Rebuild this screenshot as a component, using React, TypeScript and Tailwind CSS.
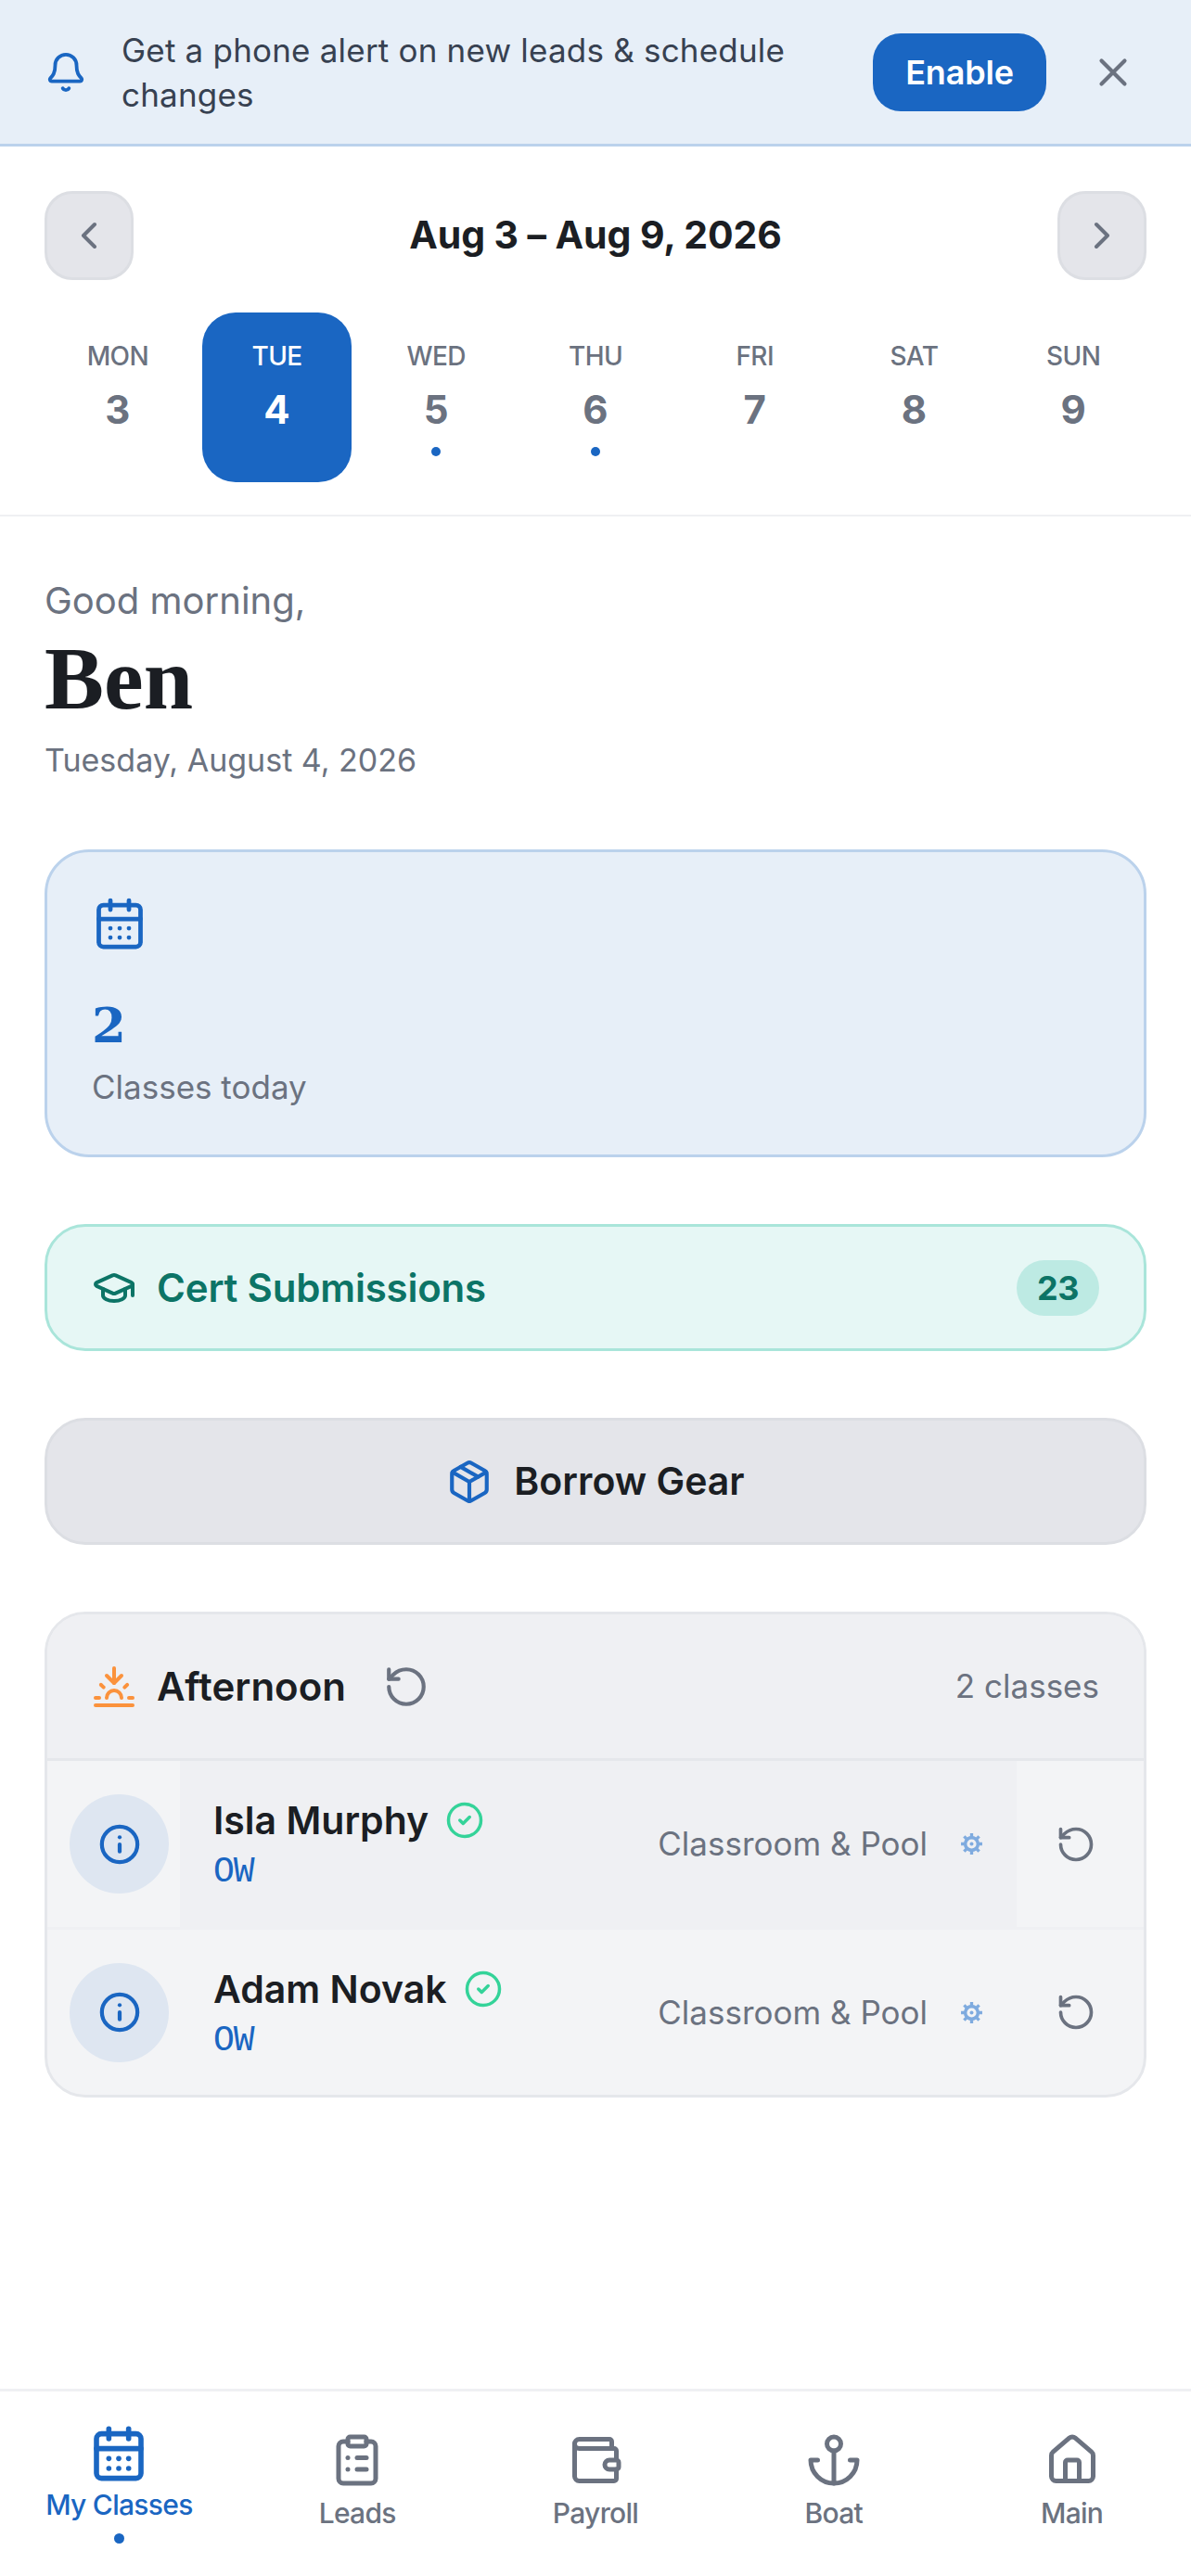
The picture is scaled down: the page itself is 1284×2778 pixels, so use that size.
import { useState } from 'react';
import {
  Bell,
  CalendarDays,
  ChevronLeft,
  ChevronRight,
  CircleCheck,
  ClipboardList,
  GraduationCap,
  House,
  Info,
  Package,
  RotateCcw,
  Sunset,
  Wallet,
  X,
} from 'lucide-react';

const days = [
  { label: 'MON', num: 3 },
  { label: 'TUE', num: 4, active: true },
  { label: 'WED', num: 5, dot: true },
  { label: 'THU', num: 6, dot: true },
  { label: 'FRI', num: 7 },
  { label: 'SAT', num: 8 },
  { label: 'SUN', num: 9 },
];

const classes = [
  { name: 'Isla Murphy', hover: true },
  { name: 'Adam Novak', hover: false },
];

// lucide's current anchor has a crossbar, this one doesn't
function AnchorIcon({ className }: { className?: string }) {
  return (
    <svg viewBox="0 0 24 24" fill="none" stroke="currentColor" strokeWidth={2} strokeLinecap="round" strokeLinejoin="round" className={className}>
      <circle cx="12" cy="5" r="3" />
      <path d="M12 22V8" />
      <path d="M5 12H2a10 10 0 0 0 20 0h-3" />
    </svg>
  );
}

// small eight-tooth cog with a dot in the middle
function GearIcon({ className }: { className?: string }) {
  return (
    <svg viewBox="0 0 24 24" fill="none" stroke="currentColor" className={className}>
      <circle cx="12" cy="12" r="6.6" strokeWidth={3.4} />
      <circle cx="12" cy="12" r="1.9" fill="currentColor" stroke="none" />
      <path d="M12 1v4M12 19v4M1 12h4M19 12h4M4.2 4.2l2.9 2.9M16.9 16.9l2.9 2.9M4.2 19.8l2.9-2.9M16.9 7.1l2.9-2.9" strokeWidth={3.2} />
    </svg>
  );
}

const tabs = [
  { label: 'Leads', icon: ClipboardList },
  { label: 'Payroll', icon: Wallet },
  { label: 'Boat', icon: AnchorIcon },
  { label: 'Main', icon: House },
];

function ClassRow({ name, hover }: { name: string; hover: boolean }) {
  return (
    <div className="flex h-[182px] border-b-[3px] border-[#eff0f3] last:h-[178px] last:border-b-0">
      <div className="flex w-[143px] shrink-0 items-center pl-[24px]">
        <div className="flex h-[107px] w-[107px] items-center justify-center rounded-full bg-[#dee6f1]">
          <Info className="h-[46px] w-[46px] text-[#1a66c2]" strokeWidth={2.2} />
        </div>
      </div>
      <div className={`flex flex-1 items-center pl-[36px] pr-[36px] ${hover ? 'bg-[#eff0f3]' : ''}`}>
        <div className="flex-1 pt-[5px]">
          <div className="flex items-center gap-[18px]">
            <span className="text-[41px] leading-[50px] font-semibold text-[#1b1e23]">{name}</span>
            <CircleCheck className="h-[42px] w-[42px] text-[#34d399]" strokeWidth={2} />
          </div>
          <div className="mt-[6px] font-['Liberation_Mono',monospace] text-[38px] leading-[50px] tracking-[-1px] text-[#1a66c2]">
            OW
          </div>
        </div>
        <span className="text-[35px] text-[#6b7280]">Classroom &amp; Pool</span>
        <GearIcon className="ml-[35px] h-[25px] w-[25px] text-[#7fabdf]" />
      </div>
      <div className="flex w-[137px] shrink-0 items-center justify-center pr-[9px]">
        <RotateCcw className="h-[44px] w-[44px] text-[#6b7280]" strokeWidth={2} />
      </div>
    </div>
  );
}

export default function App() {
  const [selected] = useState(4);

  return (
    <div className="flex h-[2778px] w-[1284px] flex-col bg-white font-['Inter',sans-serif] text-[#1b1e23]">
      {/* notification prompt */}
      <div className="flex h-[158px] shrink-0 items-center border-b-[3px] border-[#bbd2ec] bg-[#e7eff8] pl-[48px] pr-[59px]">
        <Bell className="h-[46px] w-[46px] shrink-0 text-[#1a66c2]" strokeWidth={2} />
        <p className="ml-[37px] w-[740px] text-[35px] leading-[48px] tracking-[0.2px] text-[#374151]">
          Get a phone alert on new leads &amp; schedule changes
        </p>
        <button className="ml-auto flex h-[84px] w-[187px] items-center justify-center rounded-[30px] bg-[#1a66c2] text-[36px] font-semibold tracking-[-0.2px] text-white">
          Enable
        </button>
        <X className="ml-[47px] h-[50px] w-[50px] shrink-0 text-[#6b7280]" strokeWidth={2} />
      </div>

      {/* week picker */}
      <div className="shrink-0 border-b-[2px] border-[#eff0f3] px-[48px] pb-[35px] pt-[48px]">
        <div className="flex items-center justify-between">
          <button className="flex h-[96px] w-[96px] items-center justify-center rounded-[30px] border-[3px] border-[#dcdee3] bg-[#e4e5ea]">
            <ChevronLeft className="h-[48px] w-[48px] text-[#6b7280]" strokeWidth={2} />
          </button>
          <h2 className="text-[41px] font-bold tracking-[-0.1px]">Aug 3 – Aug 9, 2026</h2>
          <button className="flex h-[96px] w-[96px] items-center justify-center rounded-[30px] border-[3px] border-[#dcdee3] bg-[#e4e5ea]">
            <ChevronRight className="h-[48px] w-[48px] text-[#6b7280]" strokeWidth={2} />
          </button>
        </div>
        <div className="-mx-[2px] mt-[35px] grid grid-cols-7 gap-[10px]">
          {days.map((d) => {
            const active = d.num === selected;
            return (
              <div
                key={d.label}
                className={`relative flex h-[183px] flex-col items-center rounded-[36px] pt-[29px] ${active ? 'bg-[#1a66c2] text-white' : 'text-[#6b7280]'}`}
              >
                <span className="text-[28px] leading-[36px] font-medium tracking-[-0.6px]">{d.label}</span>
                <span className="mt-[16px] text-[42px] leading-[48px] font-bold">{d.num}</span>
                {d.dot && <span className="mt-[16px] h-[10px] w-[10px] rounded-full bg-[#1a66c2]" />}
              </div>
            );
          })}
        </div>
      </div>

      <main className="flex-1 px-[48px] pt-[66px]">
        <p className="text-[40px] leading-[50px] text-[#6b7280]">Good morning,</p>
        <h1 className="mt-[8px] font-['Liberation_Serif',serif] text-[96px] leading-[102px] font-bold text-[#1b1e23]">Ben</h1>
        <p className="mt-[12px] text-[34px] leading-[50px] text-[#6b7280]">Tuesday, August 4, 2026</p>

        <div className="mt-[71px] h-[332px] rounded-[48px] border-[3px] border-[#bbd2ec] bg-[#e7eff8] px-[48px] pt-[47px]">
          <CalendarDays className="h-[60px] w-[60px] text-[#1a66c2]" strokeWidth={1.9} />
          <div className="mt-[41px] font-['DejaVu_Serif',serif] text-[53px] leading-[76px] font-bold text-[#1a66c2]">2</div>
          <div className="mt-[4px] text-[35px] leading-[50px] text-[#6b7280]">Classes today</div>
        </div>

        <div className="mt-[72px] flex h-[137px] items-center rounded-[44px] border-[3px] border-[#a9e5da] bg-[#e6f7f5] pl-[48px] pr-[48px]">
          <GraduationCap className="h-[48px] w-[48px] text-[#0c7466]" strokeWidth={2} />
          <span className="ml-[22px] text-[42px] font-semibold tracking-[-0.2px] text-[#0c7466]">Cert Submissions</span>
          <span className="ml-auto flex h-[60px] w-[89px] items-center justify-center rounded-full bg-[#bdeae3] text-[36px] font-bold tracking-[-0.5px] text-[#0c7466]">
            23
          </span>
        </div>

        <button className="mt-[72px] flex h-[137px] w-full items-center justify-center gap-[23px] rounded-[44px] border-[3px] border-[#dcdee3] bg-[#e4e5ea]">
          <Package className="h-[50px] w-[50px] text-[#1a66c2]" strokeWidth={2} />
          <span className="text-[41px] font-semibold">Borrow Gear</span>
        </button>

        <section className="mt-[72px] overflow-hidden rounded-[44px] border-[3px] border-[#e5e7eb] bg-[#f3f4f6]">
          <div className="flex h-[158px] items-center border-b-[3px] border-[#e5e7eb] bg-[#eff0f3] pl-[48px] pr-[48px]">
            <Sunset className="h-[48px] w-[48px] text-[#fb923c]" strokeWidth={2} />
            <span className="ml-[22px] text-[42px] font-semibold">Afternoon</span>
            <RotateCcw className="ml-[40px] h-[50px] w-[50px] text-[#6b7280]" strokeWidth={2} />
            <span className="ml-auto text-[35px] text-[#6b7280]">2 classes</span>
          </div>
          {classes.map((c) => (
            <ClassRow key={c.name} name={c.name} hover={c.hover} />
          ))}
        </section>
      </main>

      {/* bottom tabs */}
      <nav className="grid h-[202px] shrink-0 grid-cols-5 border-t-[3px] border-[#eff0f3] bg-white">
        <div className="flex flex-col items-center pt-[35px] text-[#1a66c2]">
          <CalendarDays className="h-[64px] w-[64px]" strokeWidth={2.1} />
          <span className="mt-[3px] text-[30px] leading-[40px] font-medium tracking-[-0.7px]">My Classes</span>
          <span className="mt-[11px] h-[11px] w-[11px] rounded-full bg-[#1a66c2]" />
        </div>
        {tabs.map((t) => {
          const Icon = t.icon;
          return (
            <div key={t.label} className="flex flex-col items-center pt-[44px] text-[#6b7280]">
              <Icon className="h-[60px] w-[60px]" />
              <span className="mt-[7px] text-[30px] leading-[40px] font-medium tracking-[-0.7px]">{t.label}</span>
            </div>
          );
        })}
      </nav>
    </div>
  );
}
